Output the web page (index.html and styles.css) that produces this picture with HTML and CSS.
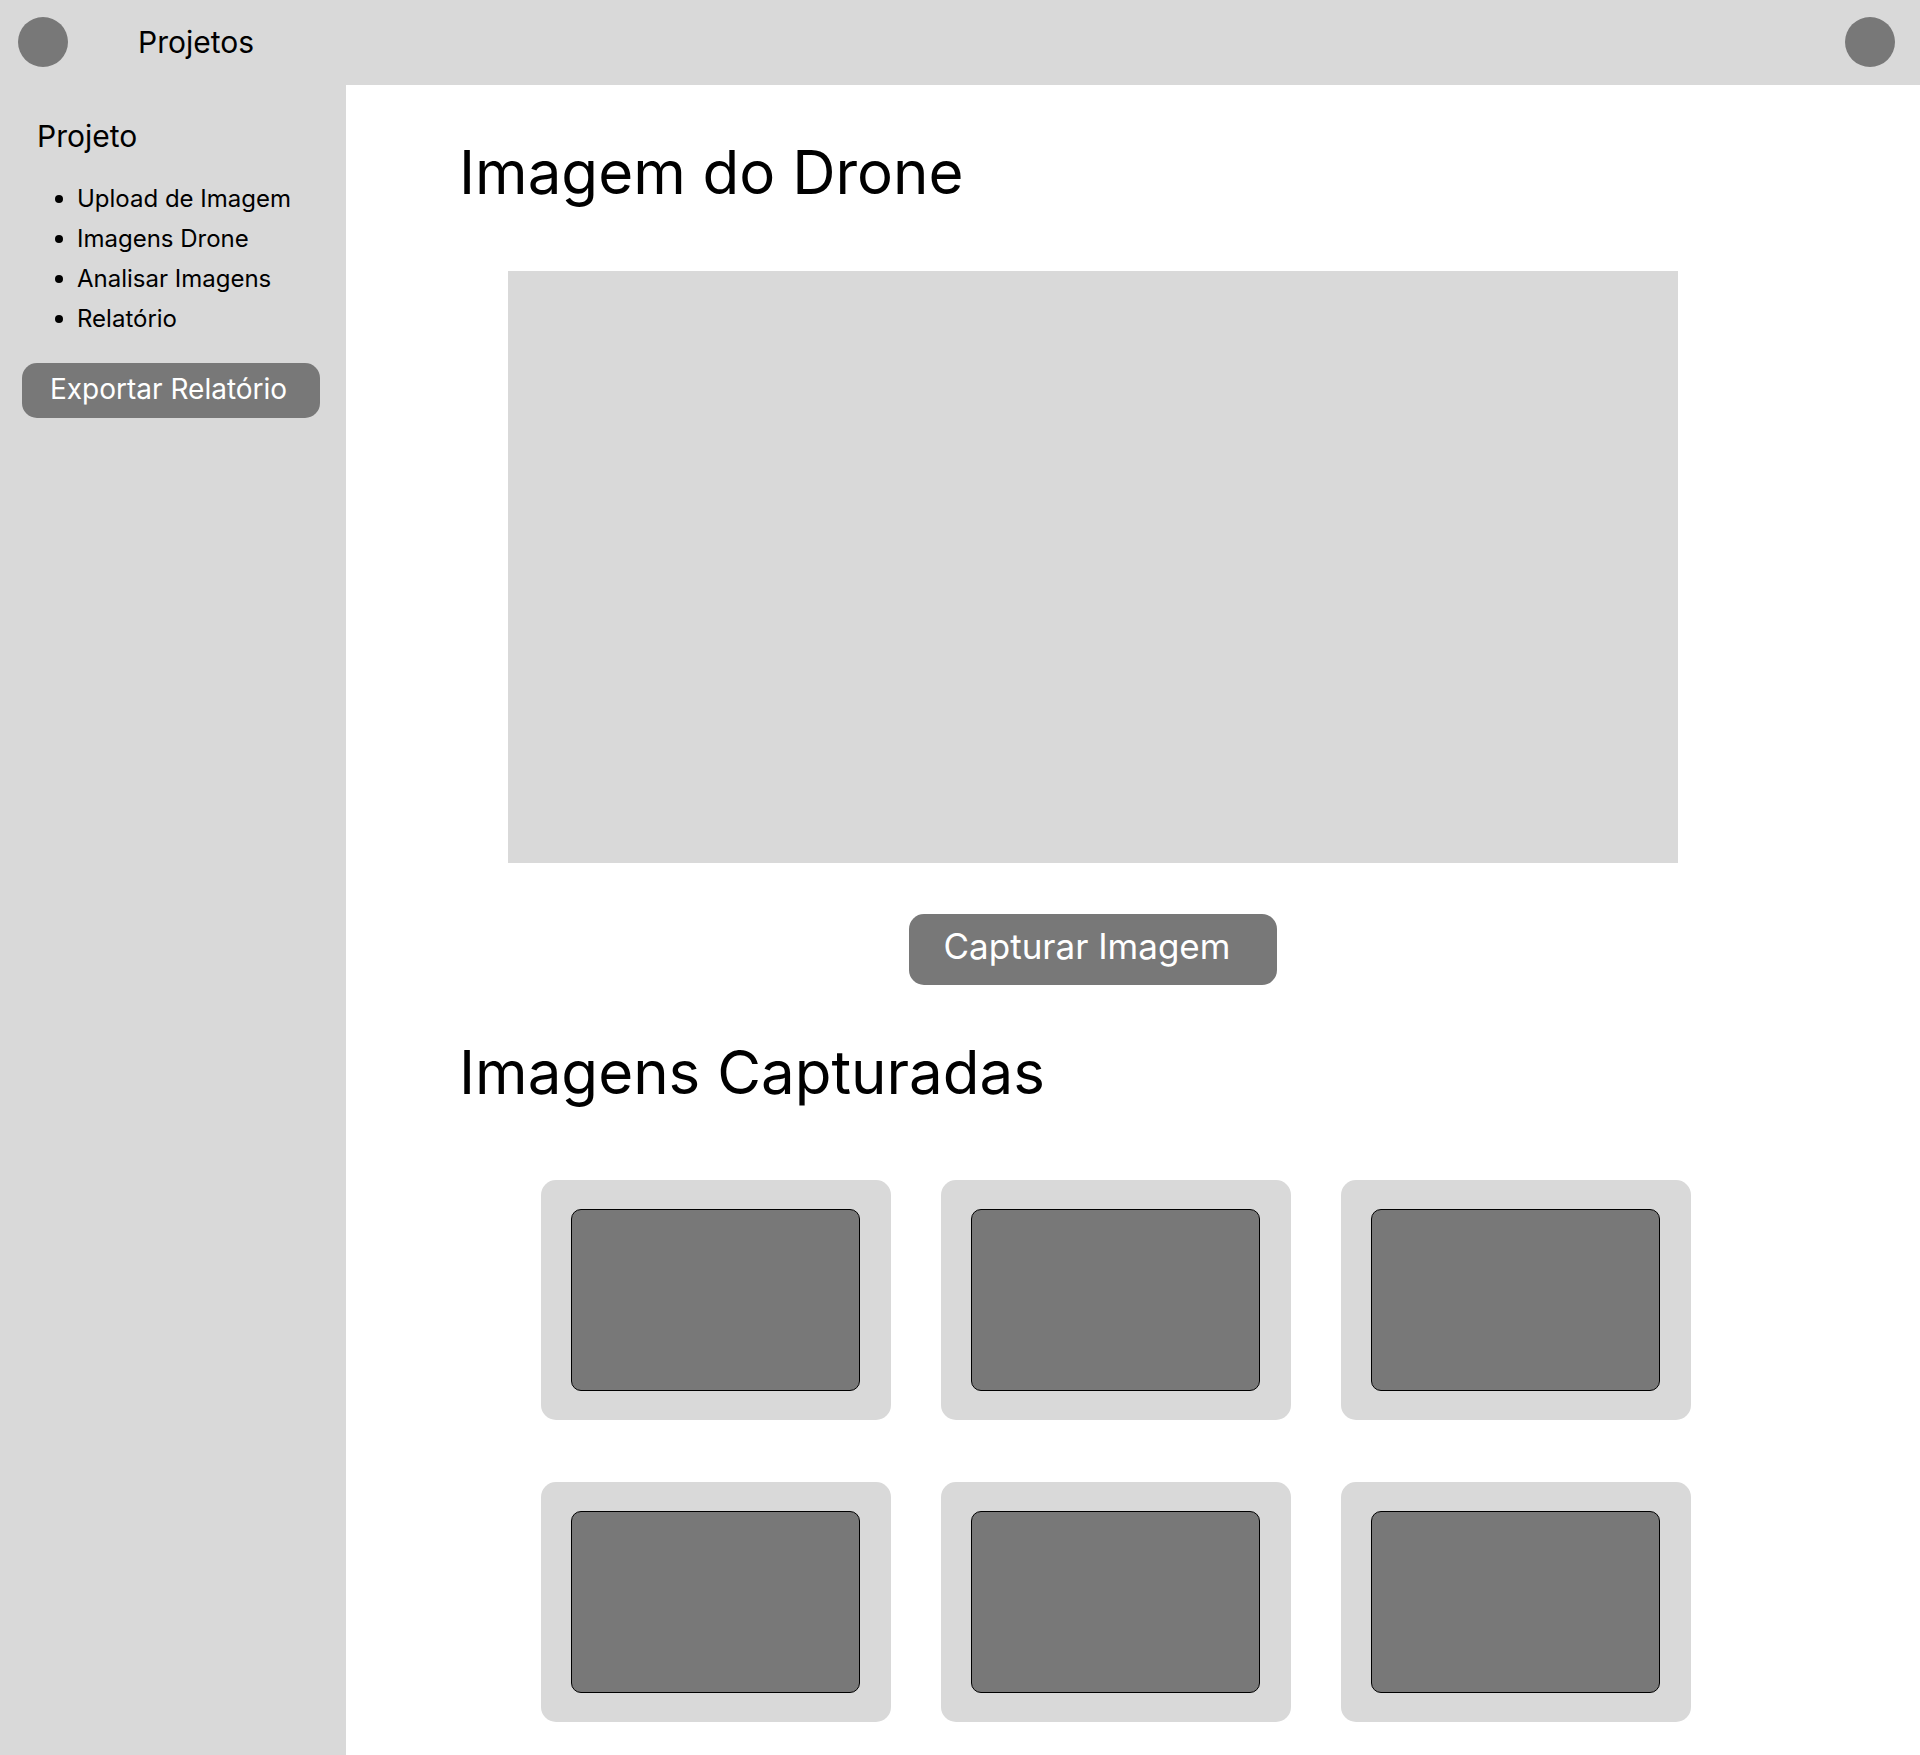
FILE: index.html
```html
<!DOCTYPE html>
<html lang="pt-BR">
<head>
  <meta charset="utf-8">
  <meta name="viewport" content="width=device-width, initial-scale=1">
  <title>Imagem do Drone</title>
  <link rel="stylesheet" href="styles.css">
</head>
<body>
  <header class="topbar">
    <a class="avatar" href="#" aria-label="Início"></a>
    <a class="topbar-link" href="#">Projetos</a>
    <button class="avatar avatar-user" type="button" aria-label="Perfil"></button>
  </header>
  <div class="layout">
    <aside class="sidebar">
      <h2 class="sidebar-title">Projeto</h2>
      <nav>
        <ul class="menu">
          <li class="menu-item"><a href="#">Upload de Imagem</a></li>
          <li class="menu-item"><a href="#">Imagens Drone</a></li>
          <li class="menu-item"><a href="#">Analisar Imagens</a></li>
          <li class="menu-item"><a href="#">Relatório</a></li>
        </ul>
      </nav>
      <button class="button button-export" type="button">Exportar Relatório</button>
    </aside>
    <main class="content">
      <section class="drone">
        <h1 class="heading">Imagem do Drone</h1>
        <div class="preview"></div>
        <div class="actions">
          <button class="button button-capture" type="button">Capturar Imagem</button>
        </div>
      </section>
      <section class="captured">
        <h2 class="heading">Imagens Capturadas</h2>
        <div class="gallery">
          <div class="card"><div class="thumb"></div></div>
          <div class="card"><div class="thumb"></div></div>
          <div class="card"><div class="thumb"></div></div>
          <div class="card"><div class="thumb"></div></div>
          <div class="card"><div class="thumb"></div></div>
          <div class="card"><div class="thumb"></div></div>
        </div>
      </section>
    </main>
  </div>
</body>
</html>
```
FILE: styles.css
```css
:root {
  --surface: #d9d9d9;
  --fill: #787878;
}

* {
  box-sizing: border-box;
}

body {
  display: flex;
  flex-direction: column;
  min-height: 100vh;
  margin: 0;
  background: #fff;
  color: #000;
  font-family: Inter, "Liberation Sans", sans-serif;
}

a {
  color: inherit;
  text-decoration: none;
}

.topbar {
  display: flex;
  align-items: center;
  padding: 17px 25px 18px 18px;
  background: var(--surface);
}

.avatar {
  flex: none;
  width: 50px;
  height: 50px;
  padding: 0;
  border: 0;
  border-radius: 50%;
  background: var(--fill);
}

.avatar-user {
  margin-left: auto;
}

.topbar-link {
  margin-left: 70px;
  font-size: 30px;
  line-height: 36px;
}

.layout {
  display: flex;
  flex: 1;
}

.sidebar {
  flex: none;
  width: 346px;
  padding: 33px 26px 33px 22px;
  background: var(--surface);
}

.sidebar-title {
  margin: 0 0 25px 15px;
  font-size: 30px;
  font-weight: 400;
  line-height: 36px;
}

.menu {
  margin: 0 0 24px;
  padding: 0 0 0 33px;
  list-style: none;
}

.menu-item {
  display: flex;
  align-items: center;
  gap: 14px;
  font-size: 24px;
  line-height: 40px;
  white-space: nowrap;
}

.menu-item::before {
  content: "";
  width: 8px;
  height: 8px;
  border-radius: 50%;
  background: #000;
}

.button {
  border: 0;
  border-radius: 15px;
  background: var(--fill);
  color: #fff;
  font-family: inherit;
  text-align: left;
  white-space: nowrap;
}

.button-export {
  width: 100%;
  padding: 9px 26px 12px 28px;
  font-size: 28px;
  line-height: 34px;
}

.button-capture {
  padding: 10px 47px 17px 35px;
  font-size: 35px;
  line-height: 44px;
}

.content {
  flex: 1;
  min-width: 0;
  padding: 50px 229px 33px 113px;
}

.heading {
  margin: 0;
  font-size: 60px;
  font-weight: 400;
  line-height: 74px;
}

.preview {
  margin: 62px 13px 51px 49px;
  aspect-ratio: 1170 / 592;
  background: var(--surface);
}

.actions {
  display: flex;
  justify-content: center;
  margin: 0 13px 50px 49px;
}

.gallery {
  display: grid;
  grid-template-columns: repeat(3, 1fr);
  gap: 62px 50px;
  margin: 71px 0 0 82px;
}

.card {
  display: flex;
  aspect-ratio: 350 / 240;
  padding: 29px 31px 29px 30px;
  border-radius: 15px;
  background: var(--surface);
}

.thumb {
  flex: 1;
  border: 1px solid #000;
  border-radius: 10px;
  background: var(--fill);
}
```
